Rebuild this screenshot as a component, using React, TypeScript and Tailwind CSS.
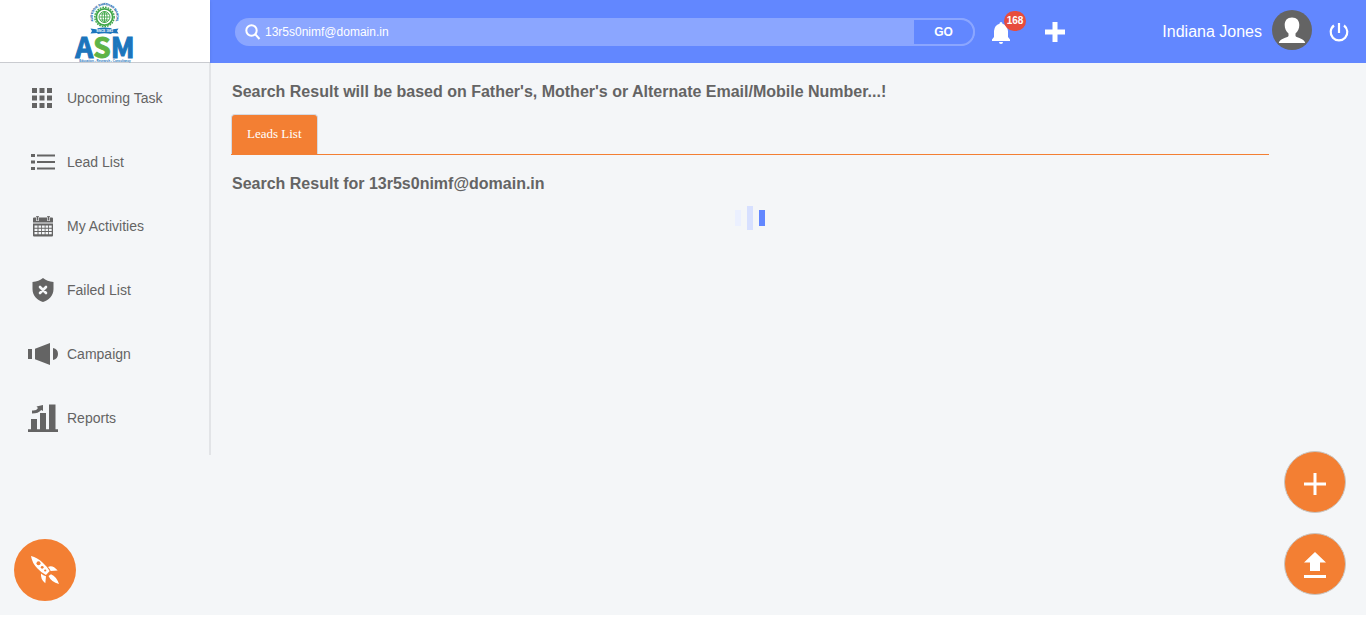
import { ReactNode } from "react";

function Logo() {
  return (
    <svg width="60" height="63" viewBox="75 0 60 63" overflow="visible" role="img" aria-label="ASM">
      <defs>
        <path id="arc" d="M93.2 21.1 A12 12 0 1 1 115.8 21.1" />
      </defs>
      <text fontFamily="Liberation Sans" fontSize="3" fill="#1c6ab0" stroke="#1c6ab0" strokeWidth="0.200">
        <textPath href="#arc">AUDYOGIK SHIKSHAN MANDAL</textPath>
      </text>
      <circle cx="104.500" cy="17" r="9.700" fill="none" stroke="#3fa648" strokeWidth="1.400" strokeDasharray="1.700 1" />
      <circle cx="104.500" cy="17" r="8.200" fill="#fff" stroke="#3fa648" strokeWidth="1.800" />
      <g fill="none" stroke="#3fa648" strokeWidth="0.900">
        <circle cx="104.500" cy="17" r="5.500" />
        <ellipse cx="104.500" cy="17" rx="2.500" ry="5.500" />
        <path d="M99 17h11M104.500 11.500v11M100 14h9M100 20h9" />
      </g>
      <path d="M90.500 28.500l7 1v-1.300q7-1.500 14 0v1.300l7-1-1.500 2.500 1.500 2.500-7-.6v1q-7-1.200-14 0v-1l-7 .6 1.500-2.500z" fill="#1c75bc" />
      <text x="104.500" y="32" textAnchor="middle" fontFamily="Liberation Sans" fontSize="3" fontWeight="bold" fill="#fff">SINCE 1983</text>
      <text x="105" y="58" textAnchor="middle" fontFamily="'Noto Sans CJK SC', sans-serif" fontSize="28" fontWeight="bold" stroke="#1c75bc" strokeWidth="1" fill="#1c75bc">
        A<tspan fill="#5fb446" stroke="#5fb446">S</tspan>M
      </text>
      <text x="105" y="62" textAnchor="middle" fontFamily="Liberation Sans" fontSize="3" fontWeight="bold" fill="#1c75bc">Education ▪ Research ▪ Consultancy</text>
    </svg>
  );
}

function Icon({ children }: { children: ReactNode }) {
  return (
    <svg width="32" height="32" viewBox="0 0 32 32" fill="#646464" aria-hidden="true">
      {children}
    </svg>
  );
}

const items: { label: string; icon: ReactNode }[] = [
  {
    label: "Upcoming Task",
    icon: (
      <path d="M5 6h5v5H5zM12.500 6h5v5h-5zM20 6h5v5h-5zM5 13.500h5v5H5zM12.500 13.500h5v5h-5zM20 13.500h5v5h-5zM5 21h5v5H5zM12.500 21h5v5h-5zM20 21h5v5h-5z" />
    ),
  },
  {
    label: "Lead List",
    icon: (
      <path d="M4 8h4v3H4zM10 8.500h18v2H10zM4 14.500h4v3H4zM10 15h18v2H10zM4 21h4v3H4zM10 21.500h18v2H10z" />
    ),
  },
  {
    label: "My Activities",
    icon: (
      <>
        <path d="M7 7.500h2v-1.300h3v1.300h8v-1.300h3v1.300h2q1 0 1 1v4H6v-4q0-1 1-1zM6 13.500h20v12q0 1-1 1H7q-1 0-1-1z" />
        <path d="M10.500 7v4M21.500 7v4" stroke="#f4f6f8" strokeWidth="2.600" />
        <path d="M10.500 6.500v4M21.500 6.500v4" stroke="#646464" strokeWidth="1.400" />
        <path d="M7.500 15.500h3v2.300h-3zM11.500 15.500h2.700v2.300h-2.700zM15 15.500h2.700v2.300H15zM18.500 15.500h2.700v2.300h-2.700zM22 15.500h2.700v2.300H22zM7.500 18.700h3V21h-3zM11.500 18.700h2.700V21h-2.700zM15 18.700h2.700V21H15zM18.500 18.700h2.700V21h-2.700zM22 18.700h2.700V21H22zM7.500 22h3v2.300h-3zM11.500 22h2.700v2.300h-2.700zM15 22h2.700v2.300H15zM18.500 22h2.700v2.300h-2.700zM22 22h2.700v2.300H22z" fill="#f4f6f8" />
      </>
    ),
  },
  {
    label: "Failed List",
    icon: (
      <>
        <path d="M16 4q4 3.500 10.500 4v7c0 7-5 11.500-10.500 13C10.500 26.500 5.500 22 5.500 15V8Q12 7.500 16 4z" />
        <path d="M13 13l6 6M19 13l-6 6" stroke="#f4f6f8" strokeWidth="2.600" strokeLinecap="round" />
      </>
    ),
  },
  {
    label: "Campaign",
    icon: <path d="M1 11h4v10H1zM8 10.700L23 5v22L8 21.300zM26 10q5 1 5 6t-5 6z" />,
  },
  {
    label: "Reports",
    icon: (
      <path d="M1 27.300h30V30H1zM4 17h6v11H4zM13 11h6v17h-6zM22 2.500h6.500V28H22zM5 8.500q4.500.5 6-2.500L9.500 4.500 16 3V9l-1.800-1Q11.500 11.500 5 11.500z" />
    ),
  },
];

function Header() {
  return (
    <header className="flex h-[63px] items-stretch bg-[#6287ff] text-white">
      <a href="#home" className="flex w-[210px] shrink-0 justify-center border-b border-[#c9cbd0] bg-white shadow-sm">
        <Logo />
      </a>
      <div className="flex flex-1 items-center">
        <form className="ml-[25px] flex h-7 w-[740px] overflow-hidden rounded-full bg-[#8ba6ff]">
          <label htmlFor="search" className="flex w-[30px] shrink-0 items-center justify-end pr-1">
            <span className="sr-only">Search</span>
            <svg width="17" height="17" viewBox="0 0 17 17" fill="none" stroke="#fff" strokeWidth="2" aria-hidden="true">
              <circle cx="7.500" cy="7.500" r="5.200" />
              <path d="M11.200 11.200L15.500 16" />
            </svg>
          </label>
          <input id="search" type="text" defaultValue="13r5s0nimf@domain.in" className="min-w-0 flex-1 bg-transparent text-xs text-white outline-none" />
          <button type="button" className="w-[62px] rounded-r-full border-2 border-l border-[#8ba6ff] bg-[#6287ff] text-xs font-bold">
            GO
          </button>
        </form>
        <button type="button" aria-label="Notifications" className="relative ml-4">
          <svg width="20" height="24" viewBox="0 0 20 24" fill="#fff" aria-hidden="true">
            <path d="M10 2q1.500 0 1.500 1.700Q16.500 5 17 11v6l2 2.500V21H1v-1.500L3 17v-6q.5-6 5.500-7.300Q8.500 2 10 2zM8 22h4q0 2-2 2t-2-2z" />
          </svg>
          <span className="absolute -top-[9px] left-[13px] flex h-5 w-[22px] items-center justify-center rounded-full bg-[#e74c3c] text-[10px] font-bold">
            168
          </span>
        </button>
        <button type="button" aria-label="Add" className="ml-[34px]">
          <svg width="20" height="20" viewBox="0 0 20 20" fill="#fff" aria-hidden="true">
            <path d="M7.500 0h5v7.500H20v5h-7.500V20h-5v-7.500H0v-5h7.500z" />
          </svg>
        </button>
        <div className="mr-[17px] ml-auto flex items-center">
          <span className="text-base">Indiana Jones</span>
          <svg className="mb-[3px] ml-[10px]" width="40" height="40" viewBox="0 0 40 40" aria-hidden="true">
            <circle cx="20" cy="20" r="20" fill="#646464" />
            <path d="M20 7.500c4.800 0 7.300 3 7.300 7.500 0 3.500-1.300 6.500-3.800 8.500v2.500c1 2 9 2.300 9.700 7H6.800c.7-4.700 8.700-5 9.700-7v-2.500c-2.500-2-3.800-5-3.800-8.500 0-4.500 2.500-7.500 7.300-7.500z" fill="#fff" />
          </svg>
          <button type="button" aria-label="Log out" className="ml-[17px]">
            <svg width="20" height="20" viewBox="0 0 20 20" fill="none" stroke="#fff" strokeWidth="2.200" aria-hidden="true">
              <path d="M10 1v10M5 3.500a8.300 8.300 0 1 0 10 0" />
            </svg>
          </button>
        </div>
      </div>
    </header>
  );
}

const fab = "fixed flex items-center justify-center rounded-full bg-[#f37f33] text-white";

export default function App() {
  return (
    <div className="flex min-h-screen flex-col bg-white pb-2 font-['Liberation_Sans',Arial,sans-serif] text-[#646464]">
      <Header />
      <div className="flex flex-1 items-start bg-[#f4f6f8]">
        <nav className="w-[211px] shrink-0 border-r-2 border-[#e2e4e7] pt-[3px] pb-[5px]">
          <ul>
            {items.map((item) => (
              <li key={item.label}>
                <a href="#menu" className="flex h-16 items-center gap-2 pl-[27px] text-sm">
                  <Icon>{item.icon}</Icon>
                  {item.label}
                </a>
              </li>
            ))}
          </ul>
        </nav>
        <main className="mr-[97px] ml-5 flex-1 pt-[17px]">
          <h1 className="pl-px text-base font-bold">
            Search Result will be based on Father's, Mother's or Alternate Email/Mobile Number...!
          </h1>
          <div role="tablist" className="mt-[10px] flex border-b border-[#f37f33]">
            <button type="button" role="tab" aria-selected="true" className="h-10 rounded-t border border-b-0 border-[#d5dae2] bg-[#f37f33] px-[15px] pb-[2px] font-['Liberation_Serif',serif] text-[13px] text-white">
              Leads List
            </button>
          </div>
          <h2 className="mt-[17px] pl-px text-base font-bold">Search Result for 13r5s0nimf@domain.in</h2>
          <div role="status" aria-label="Loading" className="mt-[10px] flex h-6 items-center justify-center gap-[6px]">
            <span className="h-4 w-[6px] bg-[#ebf0ff]" />
            <span className="h-6 w-[6px] bg-[#d7e0ff]" />
            <span className="h-4 w-[6px] bg-[#6287ff]" />
          </div>
        </main>
      </div>
      <button type="button" aria-label="Quick start" className={`${fab} bottom-[22px] left-[14px] size-[62px]`}>
        <svg width="62" height="62" viewBox="0 0 62 62" aria-hidden="true">
          <path d="M17 17q6.500 1.500 11.500 6.500 5 4.500 7.200 8.500L32 36q-4.500-2-8.500-6.500Q18 24 17 17z" fill="#fff" />
          <circle cx="24.500" cy="24.300" r="2" fill="#f37f33" />
          <circle cx="28.200" cy="28.300" r="1.400" fill="#f37f33" />
          <circle cx="31.200" cy="31.500" r="1.100" fill="#f37f33" />
          <path d="M34 28q4.500-2.500 9.700 3.500l-7 .5q-1-2.500-2.700-4zM27 34.500q2.200 2 5 2.800l-.7 7q-5-4-4.300-9.800zM34.500 37l2.500-1.800q5.500 2.300 8 9.800-7.800-2-10.500-8z" fill="#fff" />
        </svg>
      </button>
      <button type="button" aria-label="Add lead" className={`${fab} right-5 bottom-[110px] size-[62px] border border-[#c8c5c2]`}>
        <svg width="22" height="22" viewBox="0 0 22 22" fill="#fff" className="mt-1" aria-hidden="true">
          <path d="M9.500 0h3v9.500H22v3h-9.500V22h-3v-9.500H0v-3h9.500z" />
        </svg>
      </button>
      <button type="button" aria-label="Upload" className={`${fab} right-5 bottom-7 size-[62px] border border-[#c8c5c2]`}>
        <svg width="22" height="26" viewBox="0 0 22 26" fill="#fff" className="mt-[2px]" aria-hidden="true">
          <path d="M11 0l11 10.500h-6V19H6v-8.500H0zM0 23h22v3H0z" />
        </svg>
      </button>
    </div>
  );
}
